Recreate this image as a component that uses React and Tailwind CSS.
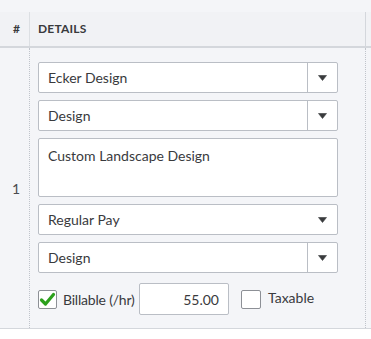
import React from "react";

function Caret() {
  return (
    <svg width="9" height="6" viewBox="0 0 9 6" className="block">
      <path d="M0.5 0.5 L8.5 0.5 L4.5 5.5 Z" fill="#393a3d" stroke="#393a3d" strokeWidth="0.6" strokeLinejoin="round" />
    </svg>
  );
}

function Select({ value, divider = true }) {
  return (
    <div className="flex h-[31px] w-[300px] rounded-[2px] border border-[#babec5] bg-white">
      <div className="flex flex-1 items-center pl-[9px] text-[14px] text-[#393a3d]">{value}</div>
      <div className={`flex w-[30px] items-center justify-center ${divider ? "border-l border-[#babec5]" : ""}`}>
        <Caret />
      </div>
    </div>
  );
}

function Check() {
  return (
    <svg width="17" height="17" viewBox="0 0 17 17" className="block">
      <path d="M2.5 9 L6.5 13 L14.5 3.5" fill="none" stroke="#2ca01c" strokeWidth="3.2" strokeLinecap="round" strokeLinejoin="round" />
    </svg>
  );
}

export default function App() {
  return (
    <div
      className="flex h-[339px] w-[371px] flex-col overflow-hidden bg-[#f4f5f8] text-[#393a3d]"
      style={{ fontFamily: "Lato, 'Noto Sans', sans-serif" }}
    >
      <div className="h-[12px] shrink-0 bg-[#f4f5f8]" />
      <div className="flex h-[36px] shrink-0 border-b-2 border-[#d4d7dc] bg-[#f1f2f5]">
        <div className="flex w-[30px] items-center justify-end border-r border-[#dcdfe3] pr-[9px] text-[12px] font-bold">#</div>
        <div className="flex w-[336px] items-center border-r border-[#d4d7dc] pl-[8px] text-[12px] font-bold tracking-[0.2px]">DETAILS</div>
        <div className="flex-1" />
      </div>
      <div className="flex h-[281px] shrink-0 border-b border-[#d4d7dc]">
        <div className="flex w-[30px] items-center justify-end border-r border-dotted border-[#c0c4cb] pr-[9px] text-[14px] text-[#4a4b4f]">1</div>
        <div className="flex w-[336px] flex-col gap-[7px] border-r border-dotted border-[#c0c4cb] pl-[8px] pt-[14px]">
          <Select value="Ecker Design" />
          <Select value="Design" />
          <div className="h-[59px] w-[300px] rounded-[2px] border border-[#babec5] bg-white px-[9px] pt-[8px] text-[14px] leading-[18px]">
            Custom Landscape Design
          </div>
          <Select value="Regular Pay" divider={false} />
          <Select value="Design" />
          <div className="mt-[3px] flex h-[32px] items-center">
            <div className="flex h-[19px] w-[19px] items-center justify-center rounded-[2px] border border-[#8d9096] bg-white">
              <Check />
            </div>
            <span className="ml-[6px] w-[72px] whitespace-nowrap text-[14px] tracking-[-0.2px]">Billable (/hr)</span>
            <div className="ml-[4px] flex h-[32px] w-[90px] items-center justify-end rounded-[2px] border border-[#babec5] bg-white pr-[9px] text-[14px]">
              55.00
            </div>
            <div className="ml-[12px] h-[19px] w-[20px] rounded-[2px] border border-[#8d9096] bg-white" />
            <span className="ml-[7px] -mt-[4px] text-[14px]">Taxable</span>
          </div>
        </div>
        <div className="flex-1" />
      </div>
      <div className="flex-1 bg-white" />
    </div>
  );
}
